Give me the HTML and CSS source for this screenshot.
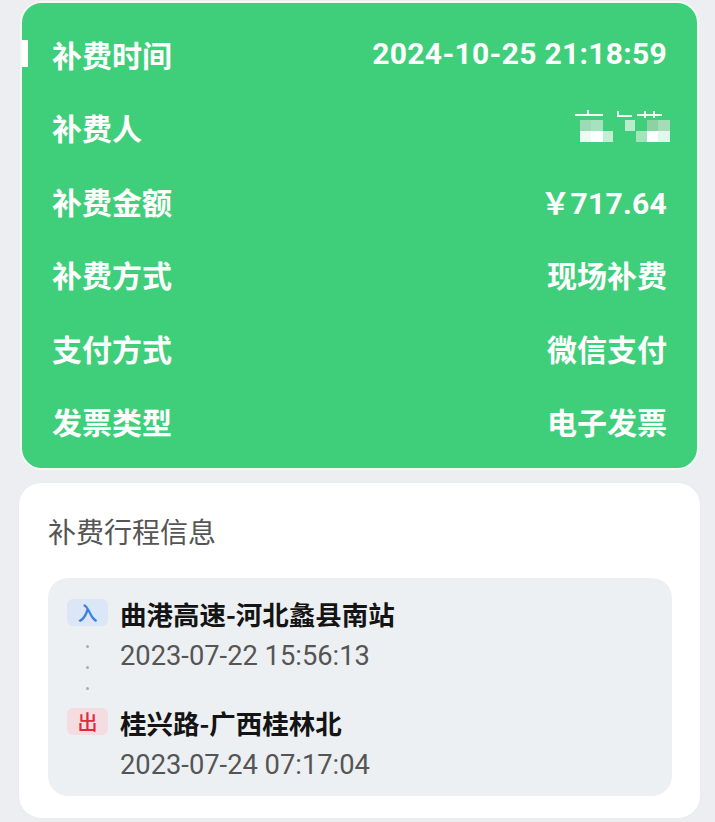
FILE: index.html
```html
<!DOCTYPE html>
<html lang="zh-CN">
<head>
<meta charset="utf-8">
<title>补费详情</title>
<link rel="stylesheet" href="styles.css">
</head>
<body>
<div class="page">
  <section class="summary">
    <span class="marker"></span>
    <div class="row"><span class="label">补费时间</span><span class="value num">2024-10-25 21:18:59</span></div>
    <div class="row"><span class="label">补费人</span>
      <svg class="mosaic" width="100" height="45" viewBox="0 0 100 45" aria-label="补费人姓名（已打码）">
        <rect x="3" y="7" width="28" height="2" fill="#f4fcf7"/>
        <rect x="15" y="3" width="2" height="4" fill="#f4fcf7"/>
        <rect x="8" y="13" width="11" height="11" fill="#9edbb4"/>
        <rect x="19" y="13" width="12" height="11" fill="#a8e1bd"/>
        <rect x="8" y="24" width="11" height="11" fill="#eefaf2"/>
        <rect x="19" y="24" width="12" height="11" fill="#ffffff"/>
        <rect x="31" y="24" width="10" height="11" fill="#c2eed2"/>
        <rect x="45" y="4" width="2" height="5" fill="#f4fcf7"/>
        <rect x="45" y="8" width="15" height="2" fill="#f4fcf7"/>
        <rect x="53" y="13" width="10" height="11" fill="#b8ecca"/>
        <rect x="64" y="24" width="11" height="11" fill="#a6e3bb"/>
        <rect x="65" y="7" width="25" height="2" fill="#f4fcf7"/>
        <rect x="72" y="4" width="2" height="7" fill="#f4fcf7"/>
        <rect x="81" y="4" width="2" height="7" fill="#f4fcf7"/>
        <rect x="75" y="13" width="11" height="11" fill="#8ed1a5"/>
        <rect x="86" y="13" width="12" height="11" fill="#a3dcb7"/>
        <rect x="75" y="24" width="11" height="11" fill="#ffffff"/>
        <rect x="86" y="24" width="12" height="11" fill="#e2f8ea"/>
      </svg>
    </div>
    <div class="row"><span class="label">补费金额</span><span class="value"><span class="yen">￥</span><span class="num">717.64</span></span></div>
    <div class="row"><span class="label">补费方式</span><span class="value">现场补费</span></div>
    <div class="row"><span class="label">支付方式</span><span class="value">微信支付</span></div>
    <div class="row"><span class="label">发票类型</span><span class="value">电子发票</span></div>
  </section>

  <section class="trip">
    <h2 class="trip-title">补费行程信息</h2>
    <div class="trip-box">
      <span class="badge badge-in">入</span>
      <div class="station">曲港高速-河北蠡县南站</div>
      <div class="dots"><i></i><i></i><i></i></div>
      <div class="time">2023-07-22 15:56:13</div>
      <div class="spacer"></div>
      <span class="badge badge-out">出</span>
      <div class="station">桂兴路-广西桂林北</div>
      <div class="time">2023-07-24 07:17:04</div>
    </div>
  </section>
</div>
</body>
</html>
```

FILE: styles.css
```css
* { box-sizing: border-box; }

html, body {
  margin: 0;
  padding: 0;
}

body {
  background: #eceef1;
  font-family: Roboto, "Noto Sans CJK SC", sans-serif;
  width: 715px;
  height: 822px;
  overflow: hidden;
}

.page {
  padding: 1px 15px 0 19px;
}

.summary {
  position: relative;
  margin: 0 1px;
  background: #3fcf7a;
  border: 2px solid #f1fbf4;
  border-radius: 22px;
  padding: 14px 30px 10px 30px;
}

.marker {
  position: absolute;
  left: 0;
  top: 37px;
  width: 6px;
  height: 27px;
  background: #ffffff;
}

.row {
  display: flex;
  justify-content: space-between;
  align-items: center;
  height: 73.5px;
}

.label,
.value {
  color: #ffffff;
  font-size: 30px;
  font-weight: 700;
  font-family: "Noto Sans CJK SC", sans-serif;
}

.num {
  font-family: Roboto, "Noto Sans CJK SC", sans-serif;
  letter-spacing: 0.3px;
}

.yen {
  font-family: "Noto Sans CJK SC", sans-serif;
  font-weight: 700;
}

.mosaic {
  display: block;
  margin-right: -5px;
  margin-top: 4px;
}

.trip {
  margin-top: 13px;
  background: #ffffff;
  border-radius: 22px;
  padding: 28px 28px 22px 29px;
  box-shadow: 0 0 3px rgba(0, 0, 0, 0.03);
}

.trip-title {
  margin: 0 0 27px;
  font-size: 28px;
  line-height: 40px;
  font-weight: 400;
  color: #555555;
  font-family: "Noto Sans CJK SC", sans-serif;
}

.trip-box {
  background: #edf0f3;
  border-radius: 20px;
  padding: 15px 19px 10px 19px;
  display: grid;
  grid-template-columns: 41px 1fr;
  grid-template-rows: 42px 42px 25px 42px 42px;
  column-gap: 12px;
}

.badge {
  grid-column: 1;
  align-self: start;
  margin-top: 6px;
  height: 27px;
  border-radius: 6px;
  font-size: 20px;
  font-weight: 500;
  line-height: 27px;
  text-align: center;
  font-family: "Noto Sans CJK SC", sans-serif;
}

.badge-in {
  grid-row: 1;
  background: #dbe6f6;
  color: #3a7edc;
}

.badge-out {
  grid-row: 4;
  background: #f5dce1;
  color: #df2a3d;
}

.station {
  grid-column: 2;
  font-size: 26.5px;
  line-height: 42px;
  font-weight: 700;
  color: #141414;
  font-family: "Noto Sans CJK SC", sans-serif;
  white-space: nowrap;
}

.time {
  grid-column: 2;
  font-size: 27.3px;
  line-height: 42px;
  color: #555555;
  font-family: Roboto, sans-serif;
}

.dots {
  grid-column: 1;
  grid-row: 2 / 4;
  display: flex;
  flex-direction: column;
  align-items: center;
  gap: 18px;
  padding-top: 10px;
}

.dots i {
  display: block;
  width: 3px;
  height: 3px;
  border-radius: 50%;
  background: #a9adb3;
}

.spacer {
  grid-column: 2;
  grid-row: 3;
}
```
